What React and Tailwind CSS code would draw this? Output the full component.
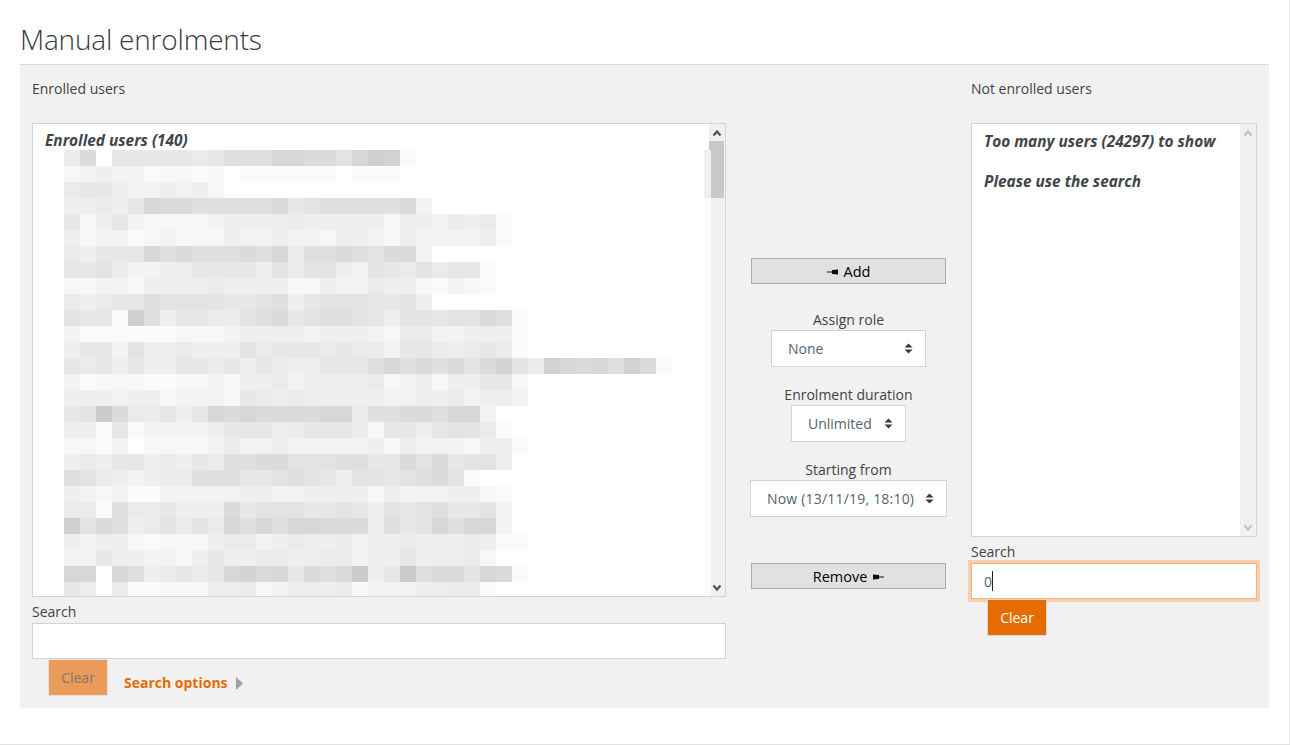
const FONT = "font-['Open_Sans',sans-serif]";

// each digit is one 16px mosaic cell: gray = 255 - digit * 4
const BLUR_ROWS = [
  "5906666656888aa997acb1",
  "234331221201111110111",
  "5664334342",
  "44546a99888889678888893",
  "6246322223444454444424435451",
  "4233123222433433244324333341",
  "54666a8988898a588987993",
  "667533446666475774376575661",
  "223324444544442243354421321",
  "54566877776678467776674",
  "7661c846655789678876477677981",
  "31111112223444434443255334441",
  "46637445444756665655366545651",
  "65646446656465446668a898979b75ba9a8b91",
  "31222112232445344445234244662",
  "44434423332654544444334453443",
  "67d955646a9a9999aa588998aa3",
  "4416133334666456665266467751",
  "22130222235334333334243332441",
  "4546645465889977788669796774",
  "87543455888667876477678971",
  "4323113333344334444243334421",
  "5518556444967776676476786673",
  "c798457575a8a8aa9994867a8aa3",
  "43442122245534544534454445411",
  "336443324644554455344644452",
  "aa0a845656ab9a6989d46d8997a91",
  "640511222445234445233344551",
];

function BlurRow({ cells }) {
  return (
    <div className="flex h-[16px]">
      {cells.split("").map((c, i) => {
        const g = 255 - parseInt(c, 16) * 4;
        return (
          <div
            key={i}
            className="w-[16px] h-[16px] shrink-0"
            style={{ backgroundColor: `rgb(${g},${g},${g})` }}
          />
        );
      })}
    </div>
  );
}

function Chevron({ down, color }) {
  return (
    <svg width="10" height="8" viewBox="0 0 10 8" className="block">
      <path
        d={down ? "M1.5 1.5 L5 5.5 L8.5 1.5" : "M1.5 6.5 L5 2.5 L8.5 6.5"}
        fill="none"
        stroke={color}
        strokeWidth="2.2"
      />
    </svg>
  );
}

function ScrollBar({ active }) {
  const color = active ? "#505050" : "#c2c2c2";
  return (
    <div className="w-[16px] shrink-0 bg-[#f0f0f0] flex flex-col">
      <div className="h-[17px] w-full flex items-center justify-center">
        <Chevron color={color} />
      </div>
      {active && <div className="h-[57px] w-[15px] bg-[#c8c8c8]" />}
      <div className="flex-1" />
      <div className="h-[17px] w-full flex items-center justify-center">
        <Chevron down color={color} />
      </div>
    </div>
  );
}

function Spinner() {
  return (
    <svg width="9" height="11" viewBox="0 0 9 11" className="block shrink-0">
      <path d="M4.5 0.5 L8.5 4.5 L0.5 4.5 Z M0.5 6.5 L8.5 6.5 L4.5 10.5 Z" fill="#373a3c" />
    </svg>
  );
}

function SelectBox({ value, className, textClass = "" }) {
  return (
    <div
      className={`h-[37px] flex items-center justify-between pl-4 pr-[12px] bg-white border border-[#ced4da] text-[#55636f] text-[14px] ${className}`}
    >
      <span className={`whitespace-nowrap ${textClass}`}>{value}</span>
      <Spinner />
    </div>
  );
}

function Label({ children, className = "" }) {
  return <div className={`h-[21px] leading-[21px] text-[14px] text-[#3f4346] ${className}`}>{children}</div>;
}

function MoveButton({ children }) {
  return (
    <button className="w-[195px] h-[26px] pt-px flex items-center justify-center gap-[5px] bg-[#e1e1e1] border border-[#aaaaaa] text-[14.5px] text-black">
      {children}
    </button>
  );
}

function ClearButton({ disabled }) {
  return (
    <button
      className={`w-[60px] h-[37px] shrink-0 border text-[14px] ${
        disabled
          ? "bg-[#ea9b57] border-[#e2e2e2] text-[#80796f]"
          : "bg-[#e66b00] border-[#d8d8d8] text-white"
      }`}
    >
      Clear
    </button>
  );
}

export default function App() {
  return (
    <div className={`${FONT} w-[1290px] h-[745px] bg-white border-r border-b border-[#dfe1e4] overflow-hidden`}>
      <div className="pl-5 pr-[20px]">
        <h2 className="h-[64px] pt-[17px] text-[28px] leading-[44px] font-light text-[#373a3c] tracking-[-0.2px]">
          Manual enrolments
        </h2>

        <div className="h-[644px] flex px-3 pt-[13px] bg-[#f1f1f1] border-t border-[#d9dce0]">
          {/* enrolled */}
          <div className="w-[694px] shrink-0">
            <Label>Enrolled users</Label>
            <div className="relative mt-[24px] h-[474px] flex bg-white border border-[#ced4da] overflow-hidden">
              <div className="flex-1 min-w-0 overflow-hidden">
                <div className="h-[26px] pl-3 pt-[7px] leading-[20px] text-[15.4px] font-bold italic text-[#41454a]">
                  Enrolled users (140)
                </div>
                <div className="pl-[31px]">
                  {BLUR_ROWS.map((cells, i) => (
                    <BlurRow key={i} cells={cells} />
                  ))}
                </div>
              </div>
              <ScrollBar active />
              {/* edge of the blur patch that runs over the scrollbar */}
              <div className="absolute left-[671px] top-[26px] w-[7px] h-[48px] bg-[#f0f0f0]" />
              <div className="absolute left-[671px] top-[74px] w-[7px] h-[400px] bg-[#fbfbfb]" />
            </div>
            <Label className="mt-[4px] mb-[1px]">Search</Label>
            <div className="h-[36px] bg-white border border-[#ced4da]" />
            <div className="flex pl-4">
              <ClearButton disabled />
              <a className="ml-4 mt-[13px] h-[21px] leading-[21px] text-[14px] font-bold text-[#e66b00] whitespace-nowrap">
                Search options
              </a>
              <svg width="7" height="13" viewBox="0 0 7 13" className="ml-[8px] mt-[18px]">
                <path d="M0 0 L7 6.5 L0 13 Z" fill="#a0a0a0" />
              </svg>
            </div>
          </div>

          {/* buttons */}
          <div className="flex-1 flex flex-col items-center pt-[180px]">
            <MoveButton>
              <svg width="12" height="6" viewBox="0 0 12 6" className="block">
                <path d="M0 2.5 H5 V3.5 H0 Z M5 1 L11 0.5 V5.5 L5 5 Z" fill="#111" />
              </svg>
              Add
            </MoveButton>
            <Label className="mt-[25px]">Assign role</Label>
            <SelectBox value="None" className="w-[155px]" />
            <Label className="mt-[17px]">Enrolment duration</Label>
            <SelectBox value="Unlimited" className="w-[115px]" />
            <Label className="mt-[17px]">Starting from</Label>
            <SelectBox value="Now (13/11/19, 18:10)" className="w-[197px]" textClass="tracking-[0.2px]" />
            <div className="mt-[46px]">
              <MoveButton>
                Remove
                <svg width="12" height="6" viewBox="0 0 12 6" className="block">
                  <path d="M1 0.5 L7 1 V5 L1 5.5 Z M7 2.5 H12 V3.5 H7 Z" fill="#111" />
                </svg>
              </MoveButton>
            </div>
          </div>

          {/* not enrolled */}
          <div className="w-[286px] shrink-0">
            <Label>Not enrolled users</Label>
            <div className="mt-[24px] h-[414px] flex bg-white border border-[#ced4da]">
              <div className="flex-1 min-w-0 pl-3 pt-[8px] text-[15.4px] font-bold italic text-[#41454a] leading-[20px]">
                <div>Too many users (24297) to show</div>
                <div className="mt-[20px]">Please use the search</div>
              </div>
              <ScrollBar />
            </div>
            <Label className="mt-[4px] mb-[1px]">Search</Label>
            <div className="h-[36px] flex items-center pl-3 bg-white border border-[#f7b27a] shadow-[0_0_0_3px_#f5cfb1] text-[14px] text-[#55636f]">
              0<span className="w-px h-[20px] bg-[#222]" />
            </div>
            <div className="pl-4">
              <ClearButton />
            </div>
          </div>
        </div>
      </div>
    </div>
  );
}
